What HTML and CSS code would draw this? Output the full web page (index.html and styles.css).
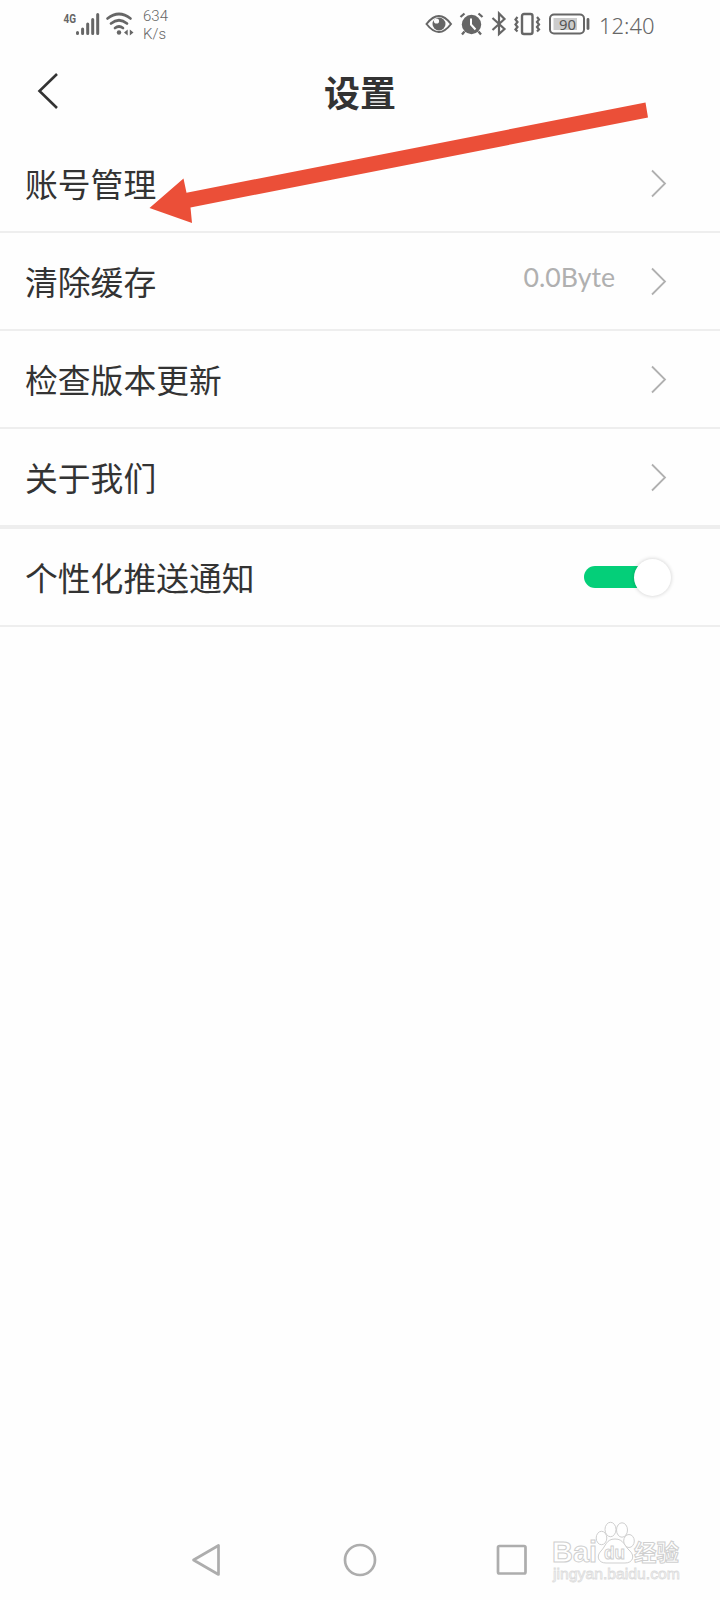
FILE: index.html
```html
<!DOCTYPE html>
<html lang="zh-CN">
<head>
<meta charset="utf-8">
<title>设置</title>
<link rel="stylesheet" href="styles.css">
</head>
<body>
<div class="screen">
  <div class="status">
    <svg class="signal" width="78" height="36" viewBox="0 0 78 36">
      <text class="net" x="1.5" y="22.500" textLength="12.5" lengthAdjust="spacingAndGlyphs">4G</text>
      <g stroke="#666" stroke-width="3" stroke-linecap="round">
        <path d="M15.5 32.5v1M20.6 29v4.500M25.700 24v9.500M30.700 19.500v14M35.700 14.500v19"/>
      </g>
      <g fill="none" stroke="#666" stroke-width="2.700" stroke-linecap="round">
        <path d="M45.500 18.500Q57 9.500 68.500 18.500M49 23.500Q57 17 65 23.500M53 28Q57 25 61 28"/>
      </g>
      <circle cx="57" cy="32.500" r="2.200" fill="#666"/>
      <path d="M62 32.500l3.700-3v6zM71.500 32.500l-3.700-3v6z" fill="#666"/>
    </svg>
    <div class="speed"><span>634</span><span>K/s</span></div>
    <svg class="indicators" width="168" height="30" viewBox="0 0 168 30">
      <g fill="none" stroke="#666" stroke-width="2">
        <path d="M1.500 15Q14 -1 26 15Q14 31 1.500 15z"/>
        <path d="M67.500 9l12 11-5.500 5V4.500l5.500 5.500-12 11" stroke-width="2.200"/>
        <rect x="97" y="5" width="10.500" height="20" rx="2" stroke-width="2.400"/>
        <path d="M92.500 8l-2 2.500 2 2.500-2 2.500 2 2.500-2 2.500 2 2M112 8l2 2.500-2 2.500 2 2.500-2 2.500 2 2.500-2 2" stroke-width="2.200"/>
        <rect x="125" y="5.500" width="34" height="19" rx="4"/>
      </g>
      <circle cx="14" cy="15" r="6.500" fill="#666"/>
      <circle cx="11.500" cy="12" r="2.600" fill="#fefefe"/>
      <circle cx="46.500" cy="15.500" r="9.700" fill="#666"/>
      <path d="M35.500 8l4-3.500M53.500 4.500l4 3.500M39.500 22.500l-2.500 3M53.500 22.500l2.500 3" stroke="#666" stroke-width="2.300"/>
      <path d="M46 9.500v6l4.500 5" fill="none" stroke="#fff" stroke-width="2"/>
      <rect x="128.500" y="9" width="23.500" height="12" fill="#ccc"/>
      <path d="M163 10.500v9" stroke="#666" stroke-width="2.800" stroke-linecap="round"/>
      <text class="charge" x="134" y="20.500" textLength="17" lengthAdjust="spacingAndGlyphs">90</text>
    </svg>
    <div class="clock">12:40</div>
  </div>

  <header class="header">
    <svg class="back" width="24" height="40" viewBox="0 0 24 40"><path d="M21 3L3.500 20 21 37"/></svg>
    <h1 class="title">设置</h1>
  </header>

  <main class="list">
    <div class="row"><span class="label">账号管理</span><svg class="chevron" viewBox="0 0 16 30"><path d="M1 2.500l13 13-13 13"/></svg></div>
    <div class="row"><span class="label">清除缓存</span><span class="value">0.0Byte</span><svg class="chevron" viewBox="0 0 16 30"><path d="M1 2.500l13 13-13 13"/></svg></div>
    <div class="row"><span class="label">检查版本更新</span><svg class="chevron" viewBox="0 0 16 30"><path d="M1 2.500l13 13-13 13"/></svg></div>
    <div class="row row-end"><span class="label">关于我们</span><svg class="chevron" viewBox="0 0 16 30"><path d="M1 2.500l13 13-13 13"/></svg></div>
    <div class="row"><span class="label">个性化推送通知</span><div class="toggle"><div class="thumb"></div></div></div>
  </main>

  <nav class="nav">
    <svg width="36" height="36" viewBox="0 0 36 36"><path d="M5.500 18L30.500 3.500v29z"/></svg>
    <svg width="36" height="36" viewBox="0 0 36 36"><circle cx="19" cy="18" r="15"/></svg>
    <svg width="36" height="36" viewBox="0 0 36 36"><rect x="4" y="4" width="27.500" height="27.500" rx="1.500"/></svg>
  </nav>

  <svg class="arrow" width="504" height="126" viewBox="147 99 504 126">
    <path d="M149.500 208L183.500 178.500L186.500 192.700L645.500 102.500L648 117.500L190.500 207.500L192 223z"/>
  </svg>

  <svg class="watermark" width="136" height="70" viewBox="550 1518 136 70">
    <text class="brand" x="552" y="1562" textLength="45" lengthAdjust="spacingAndGlyphs">Bai</text>
    <ellipse cx="601.500" cy="1538" rx="5.300" ry="6.700"/>
    <ellipse cx="610.500" cy="1529.500" rx="5.500" ry="7.200"/>
    <ellipse cx="622" cy="1530" rx="5.500" ry="7.200"/>
    <ellipse cx="629" cy="1541" rx="5.300" ry="6.500"/>
    <path d="M615 1539c-9 0-9 7-14 12c-5 5-3 12 5 12h19c8 0 10-7 5-12c-6-5-6-12-15-12z"/>
    <text class="du" x="604" y="1559" textLength="21" lengthAdjust="spacingAndGlyphs">du</text>
    <text class="jy" x="634" y="1561" textLength="45" lengthAdjust="spacingAndGlyphs">经验</text>
    <text class="url" x="553" y="1579" textLength="127" lengthAdjust="spacingAndGlyphs">jingyan.baidu.com</text>
  </svg>
</div>
</body>
</html>
```

FILE: styles.css
```css
* { box-sizing: border-box; }

body {
  margin: 0;
  background: #fefefe;
  font-family: "Noto Sans CJK SC", sans-serif;
  color: #333;
}

svg { display: block; flex: none; }

.screen {
  position: relative;
  display: flex;
  flex-direction: column;
  width: 720px;
  height: 1600px;
  overflow: hidden;
}

.status {
  display: flex;
  align-items: flex-start;
  height: 50px;
  padding-left: 62px;
  color: #666;
}

.net { font: bold 13px Roboto, sans-serif; fill: #666; }

.speed {
  display: flex;
  flex-direction: column;
  width: 30px;
  margin: 7px 0 0 3px;
  font: 300 15px/18px Roboto, sans-serif;
}

.indicators { margin: 9px 0 0 252px; }
.charge { font: 15px "Noto Sans", sans-serif; fill: #555; }

.clock {
  margin: 10px 0 0 6px;
  font: 300 22px/30px "Noto Sans", "Open Sans", sans-serif;
  letter-spacing: 0;
}

.header {
  display: grid;
  grid-template-columns: 1fr auto 1fr;
  align-items: center;
  height: 85px;
  padding-left: 36px;
  padding-right: 36px;
}

.back path { fill: none; stroke: #333; stroke-width: 2.6; }
.back { margin-bottom: 3px; }
.title { margin: 0 0 4px; font-size: 36px; line-height: 50px; font-weight: 700; }

.row {
  display: flex;
  align-items: center;
  height: 98px;
  padding: 0 53px 0 25px;
  border-bottom: 2px solid #eee;
}

.row-end { height: 100px; border-bottom-width: 4px; }
.label { flex: 1; margin-bottom: 1px; font-size: 32.8px; line-height: 48px; }

.value {
  margin: 0 36px 9px 0;
  font: 26.7px/36px Lato, sans-serif;
  color: #b0b0b0;
}

.chevron { width: 16px; height: 30px; }
.chevron path { fill: none; stroke: #b0b0b0; stroke-width: 1.8; }

.toggle {
  display: flex;
  align-items: center;
  justify-content: flex-end;
  width: 87px;
  height: 22px;
  margin-right: -4px;
  border-radius: 11px;
  background: linear-gradient(to right, #04cf79 65px, transparent 65px);
}

.thumb {
  width: 37px;
  height: 37px;
  border-radius: 50%;
  background: #fff;
  box-shadow: 0 0 4px rgba(0, 0, 0, .2);
}

.nav {
  display: flex;
  justify-content: space-between;
  margin-top: auto;
  padding: 0 190px 22px 188px;
}

.nav svg { fill: none; stroke: #adadad; stroke-width: 2.7; stroke-linejoin: round; }

.arrow { position: absolute; left: 147px; top: 99px; fill: #eb4f38; }

.watermark {
  position: absolute;
  left: 550px;
  top: 1518px;
  fill: #fff;
  stroke: #cfcfcf;
  stroke-width: 1;
}

.brand { font: bold 29px "Liberation Sans", sans-serif; }
.du { font: bold 19px "Liberation Sans", sans-serif; }
.jy { font: bold 23px "Noto Sans CJK SC", sans-serif; }
.url { font: 15px "Liberation Sans", sans-serif; stroke: #dcdcdc; stroke-width: .8; }
```
